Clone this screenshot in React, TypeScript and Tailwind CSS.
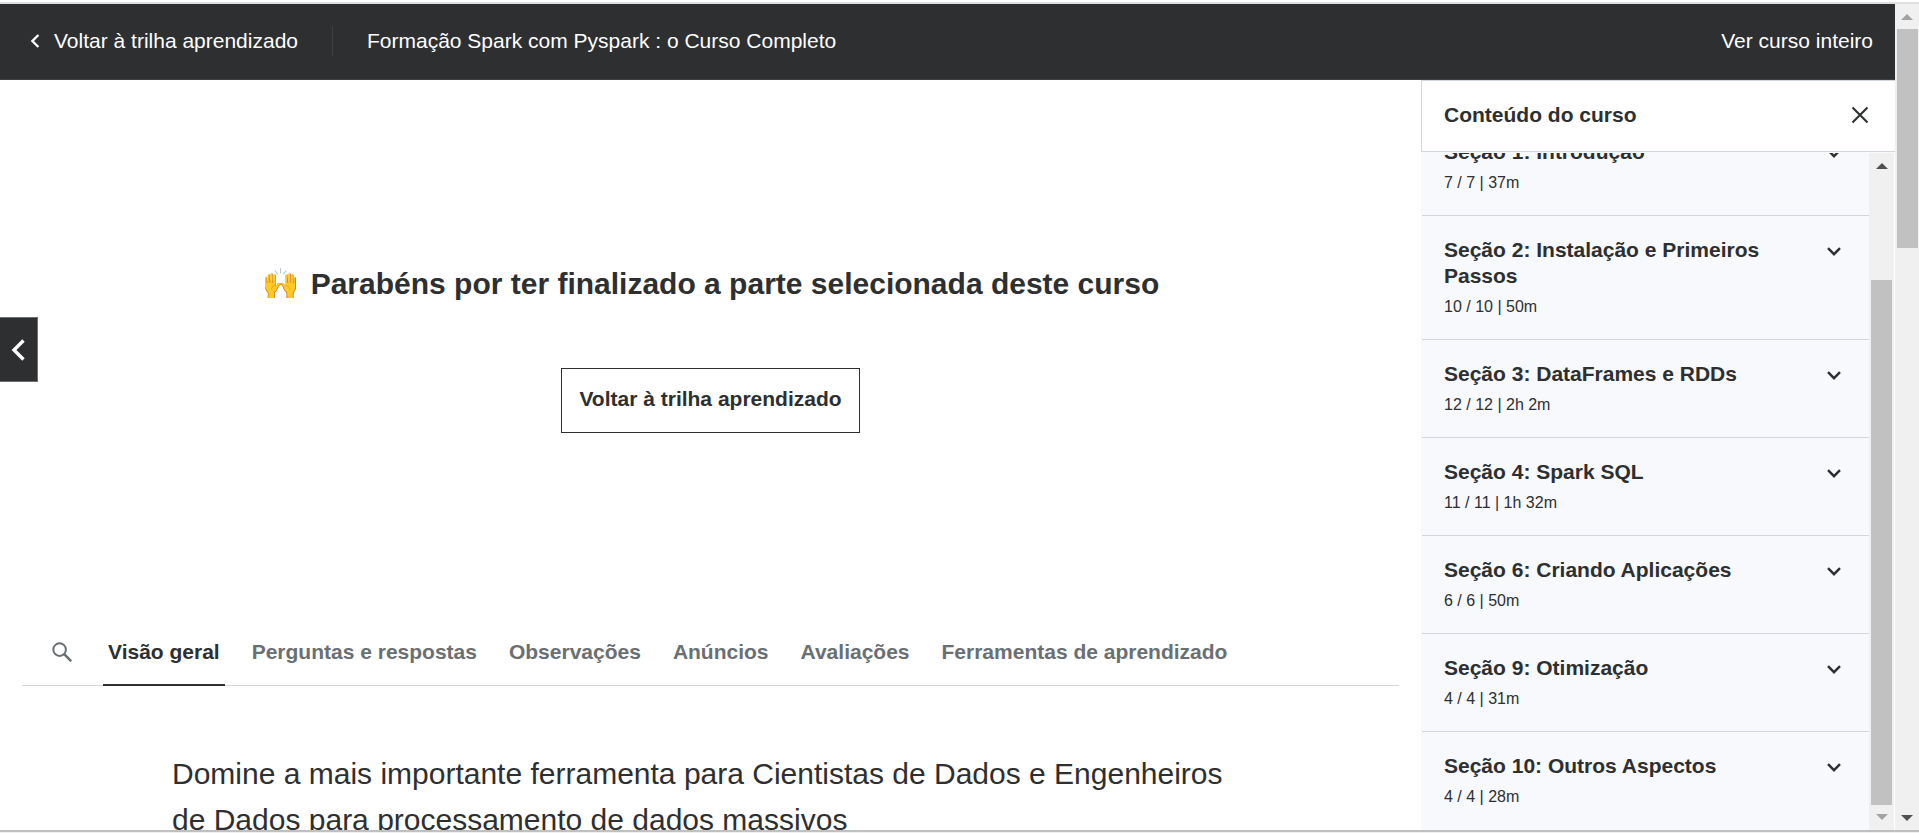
import React from "react";

type Section = { title: string; meta: string };

const sections: Section[] = [
  { title: "Seção 1: Introdução", meta: "7 / 7 | 37m" },
  { title: "Seção 2: Instalação e Primeiros Passos", meta: "10 / 10 | 50m" },
  { title: "Seção 3: DataFrames e RDDs", meta: "12 / 12 | 2h 2m" },
  { title: "Seção 4: Spark SQL", meta: "11 / 11 | 1h 32m" },
  { title: "Seção 6: Criando Aplicações", meta: "6 / 6 | 50m" },
  { title: "Seção 9: Otimização", meta: "4 / 4 | 31m" },
  { title: "Seção 10: Outros Aspectos", meta: "4 / 4 | 28m" },
];

const tabs = [
  "Visão geral",
  "Perguntas e respostas",
  "Observações",
  "Anúncios",
  "Avaliações",
  "Ferramentas de aprendizado",
];

function Arrow({ up = false, className }: { up?: boolean; className: string }) {
  return (
    <svg viewBox="0 0 12 6" className={`h-[6px] w-3 ${className}`} aria-hidden="true">
      <path d={up ? "M0 6 6 0l6 6z" : "M0 0l6 6 6-6z"} fill="currentColor" />
    </svg>
  );
}

function Header() {
  return (
    <header className="flex h-[76px] shrink-0 items-center border-b border-[#3e4143] bg-[#2d2f31] pr-[22px] pb-[2px] text-[21px] leading-[26px] text-white">
      <a href="#trilha" className="flex items-center gap-[14px] pl-[30px]">
        <svg viewBox="0 0 10 14" className="h-[14px] w-[10px]" fill="none" stroke="currentColor" strokeWidth="2.4" aria-hidden="true">
          <path d="M8.4 1 2.4 7l6 6" />
        </svg>
        Voltar à trilha aprendizado
      </a>
      <div className="mx-[34px] h-[30px] w-px bg-[#3e4143]" />
      <h1>Formação Spark com Pyspark : o Curso Completo</h1>
      <a href="#curso" className="ml-auto">
        Ver curso inteiro
      </a>
    </header>
  );
}

function Stage() {
  return (
    <section className="relative flex h-[65vh] shrink-0 flex-col items-center justify-center gap-[66px] pb-[3px]">
      <h2 className="flex items-center gap-3 text-[30px] leading-9 font-bold">
        <span>🙌</span>
        Parabéns por ter finalizado a parte selecionada deste curso
      </h2>
      <a
        href="#trilha"
        className="flex h-[65px] items-center border border-[#2d2f31] px-[17px] pb-[2px] text-[21px] leading-[26px] font-bold"
      >
        Voltar à trilha aprendizado
      </a>
      <button
        type="button"
        aria-label="Aula anterior"
        className="absolute top-[237px] left-0 flex h-[65px] w-[38px] items-center border border-l-0 border-[#6a6f73] bg-[#2d2f31] pl-[11px] text-white"
      >
        <svg viewBox="0 0 15 22" className="h-[22px] w-[15px]" fill="none" stroke="currentColor" strokeWidth="3.4" aria-hidden="true">
          <path d="M12.5 1.5 3 11l9.5 9.5" />
        </svg>
      </button>
    </section>
  );
}

function Tabs() {
  return (
    <nav className="mx-[22px] flex h-[65px] shrink-0 items-stretch border-b border-[#d1d7dc] text-[21px] leading-[26px] font-bold text-[#6a6f73]">
      <button type="button" aria-label="Pesquisar" className="mr-[31px] ml-[30px] pb-[2px]">
        <svg viewBox="0 0 20 20" className="h-5 w-5" fill="none" stroke="currentColor" aria-hidden="true">
          <circle cx="7.6" cy="7.6" r="6.3" strokeWidth="2" />
          <path d="m12.2 12.2 7 7" strokeWidth="2.6" />
        </svg>
      </button>
      <div role="tablist" className="-mb-px flex gap-[22px]">
        {tabs.map((tab, i) => (
          <button
            key={tab}
            type="button"
            role="tab"
            aria-selected={i === 0}
            className={
              i === 0
                ? "border-b-2 border-[#2d2f31] px-[5px] pb-[2px] text-[#2d2f31]"
                : "border-b-2 border-transparent px-[5px] pb-[2px]"
            }
          >
            {tab}
          </button>
        ))}
      </div>
    </nav>
  );
}

function SectionRow({ title, meta }: Section) {
  return (
    <button
      type="button"
      className="ml-px flex shrink-0 items-start justify-between border-b border-[#d1d7dc] pt-[21px] pr-7 pb-[22px] pl-[22px] text-left last:border-transparent"
    >
      <span className="flex max-w-[340px] flex-col gap-[8px]">
        <span className="text-[21px] leading-[26px] font-bold">{title}</span>
        <span className="text-base leading-5">{meta}</span>
      </span>
      <svg viewBox="0 0 14 9" className="mt-[10px] h-[9px] w-[14px]" fill="none" stroke="currentColor" strokeWidth="2.4" aria-hidden="true">
        <path d="m1 1.2 6 6 6-6" />
      </svg>
    </button>
  );
}

function Sidebar() {
  return (
    <aside className="flex w-[474px] shrink-0 flex-col">
      <div className="flex h-[72px] shrink-0 items-center justify-between border border-r-0 border-[#d1d7dc] bg-white pr-[26px] pb-[2px] pl-[22px]">
        <h2 className="text-[21px] leading-[26px] font-bold">Conteúdo do curso</h2>
        <button type="button" aria-label="Fechar">
          <svg viewBox="0 0 18 18" className="h-[18px] w-[18px]" fill="none" stroke="currentColor" strokeWidth="2.1" aria-hidden="true">
            <path d="m1.5 1.5 15 15M16.5 1.5l-15 15" />
          </svg>
        </button>
      </div>
      <div className="flex min-h-0 grow border-t border-[#f7f9fc]">
        <div className="flex min-h-0 grow flex-col justify-end overflow-hidden bg-[#f7f9fc]">
          {sections.map((s) => (
            <SectionRow key={s.title} {...s} />
          ))}
        </div>
        <div className="flex w-[26px] shrink-0 flex-col items-center border-r border-white bg-[#f0f0f0] pt-[10px] pb-[10px]">
          <Arrow up className="shrink-0 text-[#505050]" />
          <div className="mt-[111px] mb-[9px] w-[21px] grow bg-[#c1c1c1]" />
          <Arrow className="shrink-0 text-[#a3a3a3]" />
        </div>
      </div>
    </aside>
  );
}

export default function App() {
  return (
    <div className="flex h-screen flex-col overflow-hidden border-b border-[#f0f0f0] bg-white pt-[2px] font-['Liberation_Sans',Arial,sans-serif] text-[#2d2f31]">
      <div className="flex min-h-0 grow border-t-2 border-b-2 border-t-[#e0e0e0] border-b-[#c0c0c0]">
        <div className="flex min-w-0 grow flex-col">
          <Header />
          <div className="flex min-h-0 grow">
            <main className="flex min-w-0 grow flex-col overflow-hidden">
              <Stage />
              <Tabs />
              <div className="px-[22px] pt-[65px]">
                <p className="mx-auto max-w-[1077px] text-[30px] leading-[46px]">
                  Domine a mais importante ferramenta para Cientistas de Dados e Engenheiros de Dados para
                  processamento de dados massivos
                </p>
              </div>
            </main>
            <Sidebar />
          </div>
        </div>
        <div className="flex w-6 shrink-0 flex-col items-center bg-[#f0f0f0] pt-[10px] pb-[9px]">
          <Arrow up className="shrink-0 text-[#a3a3a3]" />
          <div className="mt-[9px] h-[219px] w-[21px] bg-[#c1c1c1]" />
          <Arrow className="mt-auto shrink-0 text-[#505050]" />
        </div>
      </div>
    </div>
  );
}
